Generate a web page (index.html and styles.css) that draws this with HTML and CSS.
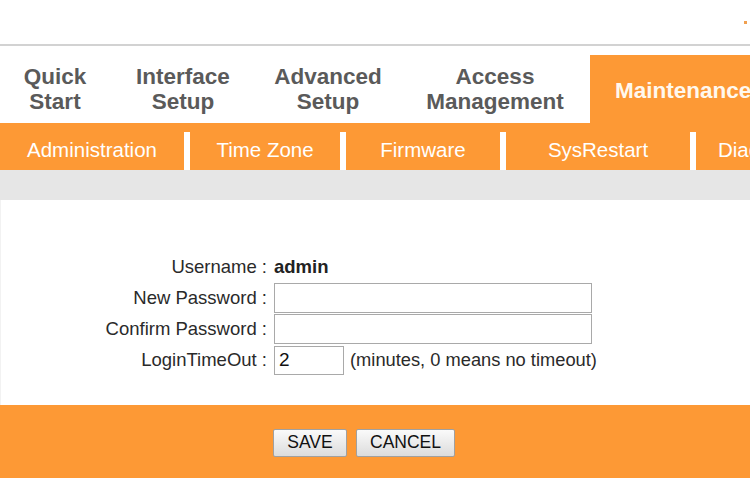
FILE: index.html
```html
<!DOCTYPE html>
<html>
<head>
<meta charset="utf-8">
<link rel="stylesheet" href="styles.css">
</head>
<body>
<div class="header"><span class="mark"></span></div>
<div class="tabs">
  <div class="tab t1">Quick<br>Start</div>
  <div class="tab t2">Interface<br>Setup</div>
  <div class="tab t3">Advanced<br>Setup</div>
  <div class="tab t4">Access<br>Management</div>
  <div class="tab t5 active">Maintenance</div>
</div>
<div class="subtabs">
  <div class="sub s1">Administration</div>
  <span class="sep"></span>
  <div class="sub s2">Time Zone</div>
  <span class="sep"></span>
  <div class="sub s3">Firmware</div>
  <span class="sep"></span>
  <div class="sub s4">SysRestart</div>
  <span class="sep"></span>
  <div class="sub s5">Diagnostics</div>
</div>
<div class="graybar"></div>
<div class="content">
  <div class="form">
    <div class="label">Username :</div>
    <div class="value"><b>admin</b></div>
    <div class="label">New Password :</div>
    <div class="value"><input class="wide" type="password"></div>
    <div class="label">Confirm Password :</div>
    <div class="value"><input class="wide" type="password"></div>
    <div class="label">LoginTimeOut :</div>
    <div class="value"><input class="short" type="text" value="2"><span class="hint">(minutes, 0 means no timeout)</span></div>
  </div>
</div>
<div class="actions">
  <button class="btn save">SAVE</button>
  <button class="btn cancel">CANCEL</button>
</div>
</body>
</html>
```
FILE: styles.css
```css
html, body {
  margin: 0;
  padding: 0;
  background: #fff;
  font-family: "Liberation Sans", Arial, sans-serif;
  overflow: hidden;
}
.header {
  border-bottom: 2px solid #d2d2d2;
  display: flex;
  justify-content: flex-end;
  box-sizing: border-box;
  height: 46px;
}
.mark {
  width: 3px;
  height: 3px;
  background: #f0a050;
  margin-top: 21px;
  margin-right: 3px;
}
.tabs {
  display: flex;
  align-items: flex-end;
  height: 77px;
  white-space: nowrap;
  overflow: hidden;
}
.tab {
  height: 68px;
  display: flex;
  flex: none;
  align-items: center;
  justify-content: center;
  text-align: center;
  font-weight: bold;
  font-size: 22.5px;
  line-height: 25px;
  color: #5a5a5a;
  padding-bottom: 1px;
  box-sizing: border-box;
}
.t1 { width: 110px; }
.t2 { width: 146px; }
.t3 { width: 144px; }
.t4 { width: 190px; }
.t5 {
  width: 180px;
  justify-content: flex-start;
  padding-left: 25px;
  padding-bottom: 0;
  padding-top: 2px;
  background: #fd9935;
  color: #fff8ee;
}
.subtabs {
  display: flex;
  height: 47px;
  background: #fd9935;
  white-space: nowrap;
  overflow: hidden;
}
.sub {
  display: flex;
  align-items: center;
  justify-content: center;
  color: #fff;
  font-size: 20.5px;
  padding-top: 6px;
  box-sizing: border-box;
  flex: none;
}
.s1 { width: 184px; }
.s2 { width: 150px; }
.s3 { width: 154px; }
.s4 { width: 184px; }
.s5 { justify-content: flex-start; padding-left: 22px; }
.sep {
  width: 6px;
  height: 38px;
  align-self: flex-end;
  background: #fff;
  flex: none;
}
.graybar {
  height: 30px;
  background: #e6e6e6;
}
.content {
  height: 205px;
  padding-top: 52px;
  box-sizing: border-box;
  border-left: 1px solid #f2f2f2;
}
.form {
  display: grid;
  grid-template-columns: 266px auto;
  grid-auto-rows: 30px;
  row-gap: 1px;
  column-gap: 7px;
  font-size: 18.5px;
  color: #2a2a2a;
}
.label {
  text-align: right;
  display: flex;
  align-items: center;
  justify-content: flex-end;
}
.value {
  display: flex;
  align-items: center;
}
.value b { color: #222; }
input {
  box-sizing: border-box;
  height: 30px;
  border: 1px solid #a9a9a9;
  margin: 0;
  padding: 0 4px;
  font-family: "Liberation Sans", Arial, sans-serif;
  font-size: 19px;
  color: #111;
  background: #fff;
}
.wide { width: 318px; }
.short { width: 70px; height: 29px; }
.hint { margin-left: 6px; font-size: 18.3px; }
.actions {
  height: 73px;
  background: #fd9935;
  display: flex;
  align-items: center;
  padding-left: 273px;
  padding-top: 2px;
  box-sizing: border-box;
  gap: 9px;
}
.btn {
  height: 28px;
  border: 1px solid #a0a0a0;
  border-radius: 2px;
  background: linear-gradient(#fafafa, #dcdcdc);
  font-family: "Liberation Sans", Arial, sans-serif;
  font-size: 17.5px;
  color: #111;
  padding: 0;
}
.save { width: 74px; }
.cancel { width: 99px; }
```
